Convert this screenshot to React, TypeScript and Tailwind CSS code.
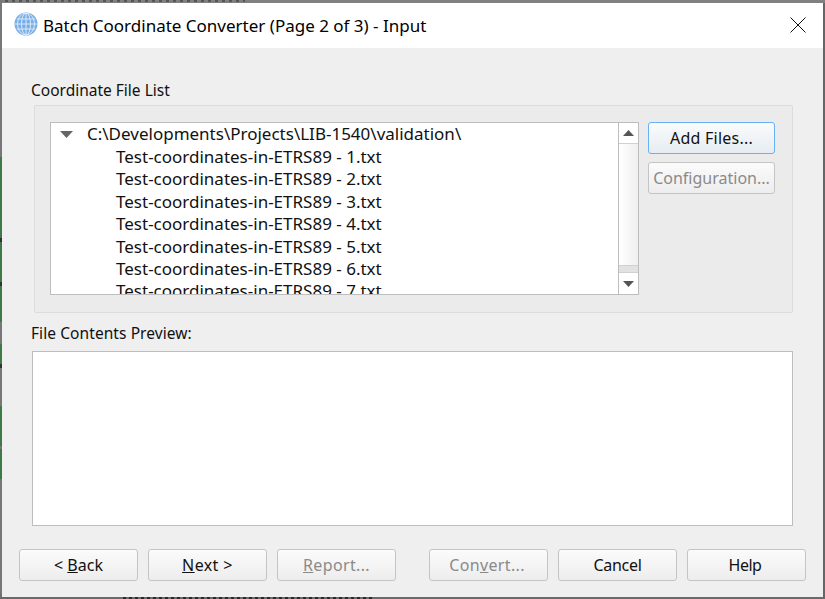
import type { ReactNode } from 'react'

const files = [1, 2, 3, 4, 5, 6, 7]

// bits of the desktop window that peek out down the left edge
const edge = [
  { h: 157, c: 'bg-[#777777]' },
  { h: 81, c: 'bg-[#3f7a45]' },
  { h: 4, c: 'bg-[#333333]' },
  { h: 40, c: 'bg-[#3f7a45]' },
  { h: 4, c: 'bg-[#333333]' },
  { h: 36, c: 'bg-[#3f7a45]' },
  { h: 22, c: 'bg-[#777777]' },
  { h: 20, c: 'bg-[#3f7a45]' },
  { h: 4, c: 'bg-[#333333]' },
  { h: 38, c: 'bg-[#777777]' },
  { h: 40, c: 'bg-[#3f7a45]' },
  { h: 3, c: 'bg-[#777777]' },
  { h: 30, c: 'bg-[#3f7a45]' },
  { h: 115, c: 'bg-[#777777]' },
]

function Btn({ children, disabled, focused, className = '' }: { children: ReactNode; disabled?: boolean; focused?: boolean; className?: string }) {
  const tone = focused
    ? 'border-[#66b2f5] from-[#fafbfc] to-[#e6ecf2]'
    : 'border-[#c4c4c4] from-[#fbfbfb] to-[#ededed]'
  return (
    <button
      disabled={disabled}
      className={`h-[32px] w-[119px] shrink-0 rounded-[3px] border bg-gradient-to-b text-[16px] leading-none ${tone} ${disabled ? 'text-[#8a8a8a]' : 'text-[#111111]'} ${className}`}
    >
      {children}
    </button>
  )
}

function Globe() {
  return (
    <svg className="-mt-[3px]" width="24" height="24" viewBox="0 0 24 24" fill="none">
      <circle cx="12" cy="12" r="11.5" fill="#78aee8" />
      <g stroke="#dbe9f9" strokeWidth="1">
        <ellipse cx="12" cy="12" rx="4.5" ry="11" />
        <ellipse cx="12" cy="12" rx="8.5" ry="11" />
        <path d="M12 1v22M1 12h22M2.8 7h18.4M2.8 17h18.4" />
      </g>
    </svg>
  )
}

export default function App() {
  return (
    <div className="flex h-[599px] w-[825px] flex-col overflow-hidden bg-[#707070] font-['Noto_Sans',sans-serif] text-[#111111]">
      <div className="h-[3px] shrink-0 bg-[#808080]">
        <div className="ml-[5px] h-[2px] w-[240px] bg-[repeating-linear-gradient(90deg,#555555_0_3px,transparent_3px_7px)]" />
      </div>

      <div className="flex h-[594px] shrink-0">
        <div className="flex w-[2px] shrink-0 flex-col -mt-[3px]">
          {edge.map((s, i) => (
            <div key={i} className={s.c} style={{ height: s.h }} />
          ))}
        </div>

        <div className="flex h-[594px] w-[821px] flex-col bg-[#efefef]">
          {/* title bar */}
          <div className="flex h-[45px] shrink-0 items-center bg-white pl-[12px]">
            <Globe />
            <span className="ml-[5px] text-[17px] leading-none text-black">Batch Coordinate Converter (Page 2 of 3) - Input</span>
            <svg className="-mt-[1px] ml-auto mr-[17px]" width="16" height="16" viewBox="0 0 16 16" fill="none">
              <path d="M0.5 0.5l15 15M15.5 0.5l-15 15" stroke="#111" />
            </svg>
          </div>

          <div className="flex min-h-0 flex-1 flex-col pl-[29px] pr-[30px]">
            <div className="mt-[32px] h-[20px] text-[15.5px] leading-[20px]">Coordinate File List</div>

            {/* group box */}
            <div className="ml-[3px] mt-[5px] flex h-[208px] items-start rounded-[2px] border border-[#dcdcdc] bg-[#ebebeb] pl-[15px] pt-[16px]">
              <div className="flex h-[173px] w-[589px] border border-[#bdbdbd] bg-white">
                <div className="min-w-0 flex-1 overflow-hidden text-[17px] leading-[22.4px] whitespace-nowrap">
                  <div className="flex h-[23px] items-center">
                    <svg className="ml-[9px] mr-[14px]" width="13" height="7" viewBox="0 0 13 7">
                      <path d="M0 0h13L6.5 7z" fill="#666" />
                    </svg>
                    <span>C:\Developments\Projects\LIB-1540\validation\</span>
                  </div>
                  {files.map(n => (
                    <div key={n} className="pl-[65px]">Test-coordinates-in-ETRS89 - {n}.txt</div>
                  ))}
                </div>
                {/* scrollbar */}
                <div className="flex w-[20px] shrink-0 flex-col border-l border-[#bdbdbd]">
                  <div className="flex h-[21px] shrink-0 items-center justify-center border-b border-[#d0d0d0] bg-white">
                    <svg width="11" height="6" viewBox="0 0 11 6"><path d="M5.5 0L11 6H0z" fill="#555" /></svg>
                  </div>
                  <div className="flex-1 border-b border-[#d0d0d0] bg-gradient-to-r from-white to-[#efefef]" />
                  <div className="h-[7px] shrink-0 border-b border-[#d0d0d0] bg-[#e2e2e2]" />
                  <div className="flex h-[21px] shrink-0 items-center justify-center bg-white">
                    <svg width="11" height="6" viewBox="0 0 11 6"><path d="M0 0h11L5.5 6z" fill="#555" /></svg>
                  </div>
                </div>
              </div>
              <div className="ml-[9px] flex flex-col gap-[8px]">
                <Btn focused className="w-[127px] tracking-[0.25px]">Add Files...</Btn>
                <Btn disabled className="w-[127px]">Configuration...</Btn>
              </div>
            </div>

            <div className="mt-[10px] h-[20px] text-[15.5px] leading-[20px] tracking-[0.08px]">File Contents Preview:</div>
            <div className="ml-[1px] mt-[8px] h-[175px] border border-[#bdbdbd] bg-white" />

            <div className="-ml-[12px] mt-[23px] flex w-[787px]">
              <Btn><span>&lt; <u>B</u>ack</span></Btn>
              <Btn className="ml-[10px] tracking-[0.4px]"><span><u>N</u>ext &gt;</span></Btn>
              <Btn disabled className="ml-[10px] tracking-[0.35px]"><span><u>R</u>eport...</span></Btn>
              <Btn disabled className="ml-[33px] pr-[3px] tracking-[0.35px]"><span>Con<u>v</u>ert...</span></Btn>
              <Btn className="ml-[10px] tracking-[-0.3px]">Cancel</Btn>
              <Btn className="ml-[10px] pr-[3px] tracking-[-0.5px]">Help</Btn>
            </div>
          </div>
        </div>

        <div className="w-[2px] shrink-0 bg-[#666666]" />
      </div>

      <div className="h-[2px] shrink-0 bg-[#6a6a6a]">
        <div className="ml-[123px] h-[2px] w-[252px] bg-[repeating-linear-gradient(90deg,#2a2a2a_0_3px,transparent_3px_6px)]" />
      </div>
    </div>
  )
}
